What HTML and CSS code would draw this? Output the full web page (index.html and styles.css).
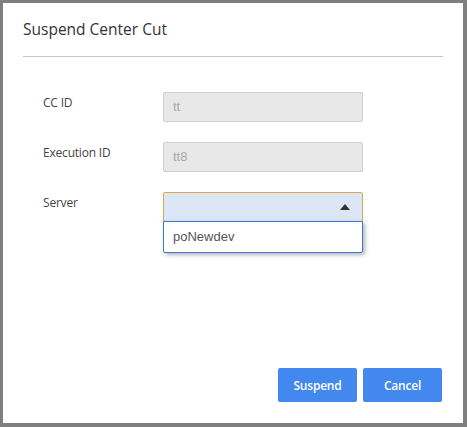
FILE: index.html
```html
<!DOCTYPE html>
<html>
<head>
<meta charset="utf-8">
<link rel="stylesheet" href="styles.css">
</head>
<body>
<div class="dialog">
  <div class="header">
    <h1 class="title">Suspend Center Cut</h1>
  </div>
  <div class="form">
    <div class="row">
      <label class="label">CC ID</label>
      <div class="field"><div class="input disabled">tt</div></div>
    </div>
    <div class="row">
      <label class="label">Execution ID</label>
      <div class="field"><div class="input disabled">tt8</div></div>
    </div>
    <div class="row">
      <label class="label">Server</label>
      <div class="field">
        <div class="select">
          <svg class="arrow" width="10" height="6" viewBox="0 0 10 6"><path d="M0 6 L5 0 L10 6 Z" fill="#333"/></svg>
        </div>
        <ul class="menu">
          <li class="option">poNewdev</li>
        </ul>
      </div>
    </div>
  </div>
  <div class="footer">
    <button class="btn">Suspend</button>
    <button class="btn">Cancel</button>
  </div>
</div>
</body>
</html>
```
FILE: styles.css
```css
html, body {
  margin: 0;
  padding: 0;
  background: #7f7f7f;
  width: 467px;
  height: 427px;
  overflow: hidden;
}
body {
  padding: 3px 4px 4px 3px;
  box-sizing: border-box;
  font-family: "Open Sans", "Noto Sans", sans-serif;
}
.dialog {
  background: #fff;
  width: 460px;
  height: 420px;
  display: flex;
  flex-direction: column;
}
.header {
  margin: 0 20px;
  padding-top: 15px;
  height: 38px;
  border-bottom: 1px solid #c6c6c6;
}
.title {
  margin: 0;
  font-size: 15.5px;
  font-weight: 400;
  color: #333;
  line-height: 22px;
}
.form {
  flex: 1;
  padding: 35px 0 0 40px;
  display: flex;
  flex-direction: column;
  gap: 20px;
}
.row {
  display: flex;
  height: 30px;
}
.label {
  width: 120px;
  font-size: 12px;
  color: #444;
  line-height: 22px;
  letter-spacing: -0.2px;
}
.field {
  position: relative;
  width: 200px;
}
.input {
  box-sizing: border-box;
  height: 30px;
  border: 1px solid #cfcfcf;
  border-radius: 2px;
  padding: 0 9px;
  font-family: "Liberation Sans", Arial, sans-serif;
  font-size: 13px;
  line-height: 28px;
}
.disabled {
  background: #e8e8e8;
  color: #a8a8a8;
}
.select {
  box-sizing: border-box;
  height: 30px;
  border: 1px solid #dca84c;
  border-radius: 2px 2px 0 0;
  background: #dce6f4;
  display: flex;
  align-items: center;
  justify-content: flex-end;
  padding-right: 12px;
}
.menu {
  position: absolute;
  top: 29px;
  left: 0;
  width: 200px;
  box-sizing: border-box;
  margin: 0;
  padding: 0;
  list-style: none;
  background: #fff;
  border: 1px solid #3b78d6;
  border-radius: 0 0 2px 2px;
  box-shadow: 2px 2px 4px rgba(0,0,0,0.3);
}
.option {
  height: 30px;
  line-height: 30px;
  padding-left: 9px;
  font-family: "Liberation Sans", Arial, sans-serif;
  font-size: 13px;
  color: #555;
}
.footer {
  display: flex;
  justify-content: flex-end;
  gap: 6px;
  padding: 0 21px 21px 0;
}
.btn {
  width: 79px;
  height: 34px;
  border: none;
  border-radius: 2px;
  background: #4288ee;
  color: #fff;
  font-family: "Open Sans", "Noto Sans", sans-serif;
  font-size: 12px;
  font-weight: 600;
  letter-spacing: -0.2px;
  padding: 0;
}
```
